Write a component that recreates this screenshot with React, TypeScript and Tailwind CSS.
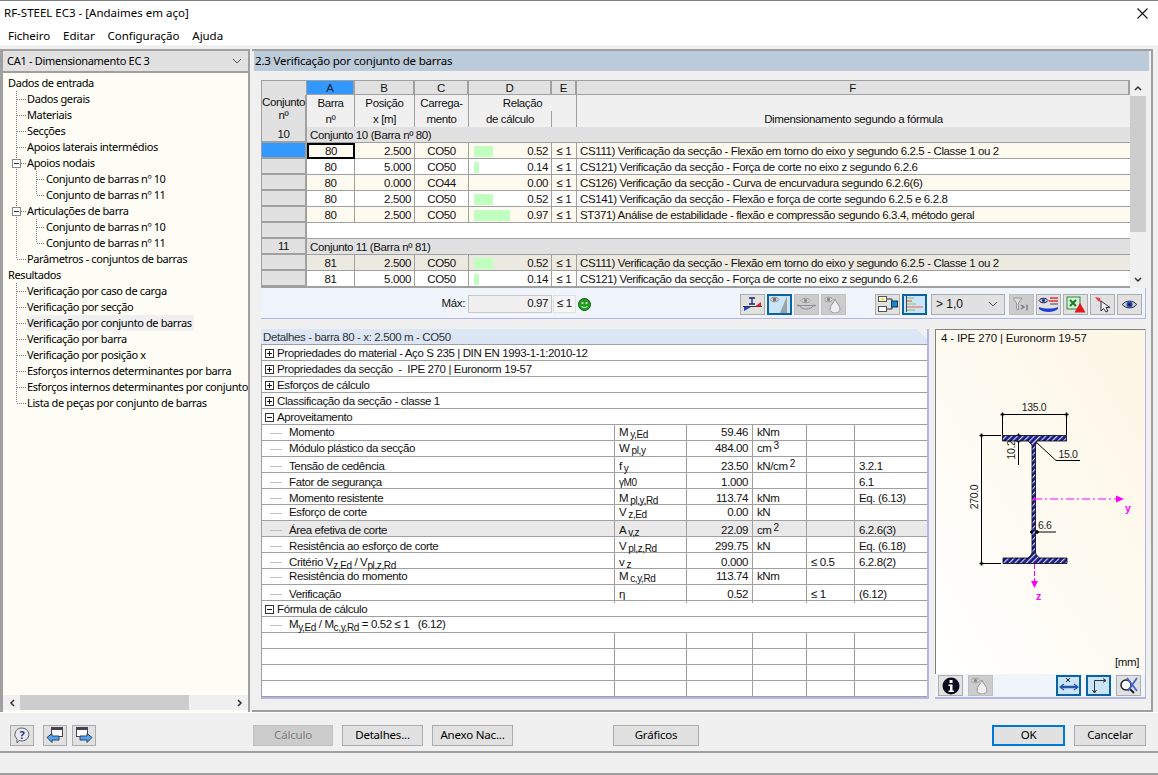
import type { ReactNode } from 'react'

const ui = { fontFamily: '"Noto Sans", sans-serif' }

type TreeRow = { label: string; level: 0 | 1 | 2; box?: boolean; last?: boolean; lastChild?: boolean; on?: boolean }

const tree: TreeRow[] = [
  { label: 'Dados de entrada', level: 0 },
  { label: 'Dados gerais', level: 1 },
  { label: 'Materiais', level: 1 },
  { label: 'Secções', level: 1 },
  { label: 'Apoios laterais intermédios', level: 1 },
  { label: 'Apoios nodais', level: 1, box: true },
  { label: 'Conjunto de barras nº 10', level: 2 },
  { label: 'Conjunto de barras nº 11', level: 2, lastChild: true },
  { label: 'Articulações de barra', level: 1, box: true },
  { label: 'Conjunto de barras nº 10', level: 2 },
  { label: 'Conjunto de barras nº 11', level: 2, lastChild: true },
  { label: 'Parâmetros - conjuntos de barras', level: 1, last: true },
  { label: 'Resultados', level: 0 },
  { label: 'Verificação por caso de carga', level: 1 },
  { label: 'Verificação por secção', level: 1 },
  { label: 'Verificação por conjunto de barras', level: 1, on: true },
  { label: 'Verificação por barra', level: 1 },
  { label: 'Verificação por posição x', level: 1 },
  { label: 'Esforços internos determinantes por barra', level: 1 },
  { label: 'Esforços internos determinantes por conjunto', level: 1 },
  { label: 'Lista de peças por conjunto de barras', level: 1, last: true },
]

function Guide({ row }: { row: TreeRow }) {
  const dots = '#777'
  if (row.level === 0) return <span className="w-[5px] shrink-0" />
  return (
    <svg width={row.level === 1 ? 24 : 43} height={16} className="shrink-0" shapeRendering="crispEdges">
      <line x1={13.5} x2={13.5} y1={0} y2={row.last ? 8 : 16} stroke={dots} strokeDasharray="1 1" />
      {row.level === 2 && (
        <>
          <line x1={33.5} x2={33.5} y1={0} y2={row.lastChild ? 8 : 16} stroke={dots} strokeDasharray="1 1" />
          <line x1={34} x2={42} y1={8.5} y2={8.5} stroke={dots} strokeDasharray="1 1" />
        </>
      )}
      {row.level === 1 && <line x1={14} x2={23} y1={8.5} y2={8.5} stroke={dots} strokeDasharray="1 1" />}
      {row.box && (
        <>
          <rect x={9.5} y={4.5} width={8} height={8} fill="#fff" stroke="#888" />
          <line x1={11} x2={16} y1={8.5} y2={8.5} stroke="#333" />
        </>
      )}
    </svg>
  )
}

function Sidebar() {
  return (
    <div className="flex h-[663px] w-[250px] shrink-0 flex-col border-l-[3px] border-r-2 border-[#a0a0a0] bg-[#fdfdf5]">
      <div className="mb-px flex h-[24px] shrink-0 items-center justify-between border-y-2 border-[#a0a0a0] bg-[#e1e1e1] pl-[4px] pr-[6px] text-[11px] tracking-[-0.3px] text-black">
        <span>CA1 - Dimensionamento EC 3</span>
        <svg width="10" height="6" viewBox="0 0 10 6" fill="none" stroke="#555"><path d="M1 1l4 4 4-4" /></svg>
      </div>
      <div className="flex-1 overflow-hidden pt-px text-[11px] leading-[16px] tracking-[-0.38px] text-black">
        {tree.map((row, i) => (
          <div key={i} className="flex h-[16px] items-center whitespace-nowrap">
            <Guide row={row} />
            <span className={row.on ? 'bg-[#f0f0f0] pr-0.5' : ''}>{row.label}</span>
          </div>
        ))}
      </div>
      <div className="mb-0.5 flex h-[15px] shrink-0 items-center bg-[#f0f0f0]">
        <span className="flex w-[17px] justify-center"><svg width="6" height="8" viewBox="0 0 6 8" fill="none" stroke="#333" strokeWidth="1.5"><path d="M5 1L2 4l3 3" /></svg></span>
        <span className="h-full w-[169px] bg-[#cdcdcd]" />
        <span className="flex-1" />
        <span className="flex w-[17px] justify-center"><svg width="6" height="8" viewBox="0 0 6 8" fill="none" stroke="#333" strokeWidth="1.5"><path d="M1 1l3 3-3 3" /></svg></span>
      </div>
    </div>
  )
}

const gridCols = 'grid grid-cols-[45px_48px_60px_54px_83px_25px_1fr]'
const cellLine = 'border-r border-b border-[#a0a0a0]'

function LetterHead({ letter, active }: { letter: string; active?: boolean }) {
  return (
    <div className={`flex h-[15px] items-center justify-center border-r-2 border-b border-t border-t-[#a0a0a0] border-r-[#a0a0a0] border-b-[#a0a0a0] pt-[2px] ${active ? 'bg-[#3399ff] text-[#123]' : 'bg-[#e1e1e1]'}`}>
      {letter}
    </div>
  )
}

type CheckRow = { bar: string; x: string; co: string; ratio: number; text: string; tone: 'cream' | 'white' | 'hover'; sel?: boolean }

function RowHead({ children, sel }: { children?: ReactNode; sel?: boolean }) {
  return (
    <div className={`flex h-[16px] items-center justify-center border-r-2 border-b-2 border-[#a0a0a0] pt-[2px] ${sel ? 'bg-[#3399ff]' : 'bg-[#e1e1e1]'}`}>
      {children}
    </div>
  )
}

function GroupRow({ id, label }: { id: string; label: string }) {
  return (
    <div className={gridCols}>
      <RowHead>{id}</RowHead>
      <div className="col-span-6 flex h-[16px] items-center border-b border-[#a0a0a0] bg-[#e1e1e1] pl-[3px] pt-[2px]">{label}</div>
    </div>
  )
}

function Check({ row }: { row: CheckRow }) {
  const bg = row.tone === 'cream' ? 'bg-[#fffaf0]' : row.tone === 'hover' ? 'bg-[#ece9e0]' : 'bg-white'
  const cell = `flex h-[16px] items-center pt-[2px] ${cellLine} ${bg}`
  return (
    <div className={gridCols}>
      <RowHead sel={row.sel} />
      <div className={row.sel ? `flex h-[16px] items-center justify-center border-2 border-black pt-px ${bg}` : `${cell} justify-center`}>{row.bar}</div>
      <div className={`${cell} justify-end pr-[3px]`}>{row.x}</div>
      <div className={`${cell} justify-center`}>{row.co}</div>
      <div className={`${cell} justify-between pl-[5px] pr-[3px]`}>
        <span className="h-[11px] bg-[#c0ffc0]" style={{ width: Math.round(row.ratio * 37) }} />
        <span>{row.ratio.toFixed(2)}</span>
      </div>
      <div className={`${cell} justify-center`}>≤ 1</div>
      <div className={`flex h-[16px] items-center whitespace-nowrap border-b border-[#a0a0a0] pl-[3px] pt-[2px] ${bg}`}>{row.text}</div>
    </div>
  )
}

const TX = {
  a: 'CS111) Verificação da secção - Flexão em torno do eixo y segundo 6.2.5 - Classe 1 ou 2',
  b: 'CS121) Verificação da secção - Força de corte no eixo z segundo 6.2.6',
  c: 'CS126) Verificação da secção - Curva de encurvadura segundo 6.2.6(6)',
  d: 'CS141) Verificação da secção - Flexão e força de corte segundo 6.2.5 e 6.2.8',
  e: 'ST371) Análise de estabilidade - flexão e compressão segundo 6.3.4, método geral',
}

function VScroll() {
  return (
    <div className="flex w-[16px] shrink-0 flex-col bg-[#f0f0f0]">
      <span className="flex h-[16px] items-center justify-center"><svg width="8" height="6" viewBox="0 0 8 6" fill="none" stroke="#333" strokeWidth="1.5"><path d="M1 5l3-3 3 3" /></svg></span>
      <span className="h-[136px] bg-[#cdcdcd]" />
      <span className="flex-1" />
      <span className="flex h-[16px] items-center justify-center"><svg width="8" height="6" viewBox="0 0 8 6" fill="none" stroke="#333" strokeWidth="1.5"><path d="M1 1l3 3 3-3" /></svg></span>
    </div>
  )
}

function ResultsTable() {
  return (
    <div className="flex">
      <div className="w-[869px] overflow-hidden border-l border-b border-[#a0a0a0] bg-white">
        <div className={gridCols}>
          <div className="h-[15px] border-t border-r border-[#a0a0a0] bg-[#e1e1e1]" />
          <LetterHead letter="A" active />
          <LetterHead letter="B" />
          <LetterHead letter="C" />
          <LetterHead letter="D" />
          <LetterHead letter="E" />
          <LetterHead letter="F" />
        </div>
        <div className={`${gridCols} h-[32px] leading-[16px]`}>
          <div className="border-r-2 border-b border-[#a0a0a0] bg-[#e1e1e1] pt-px text-center leading-[13px]">Conjunto<br />nº</div>
          <div className="border-r border-b border-[#a0a0a0] bg-[#f0f0f0] text-center">Barra<br />nº</div>
          <div className="border-r border-b border-[#a0a0a0] bg-[#f0f0f0] text-center">Posição<br />x [m]</div>
          <div className="border-r border-b border-[#a0a0a0] bg-[#f0f0f0] text-center">Carrega-<br />mento</div>
          <div className="col-span-2 flex flex-col border-r border-b border-[#a0a0a0] bg-[#f0f0f0]">
            <span className="text-center">Relação</span>
            <span className="flex flex-1">
              <span className="w-[83px] whitespace-nowrap border-r border-[#a0a0a0] text-center">de cálculo</span>
            </span>
          </div>
          <div className="border-b border-[#a0a0a0] bg-[#f0f0f0] pt-[16px] text-center">Dimensionamento segundo a fórmula</div>
        </div>
        <GroupRow id="10" label="Conjunto 10 (Barra nº 80)" />
        <Check row={{ bar: '80', x: '2.500', co: 'CO50', ratio: 0.52, text: TX.a, tone: 'cream', sel: true }} />
        <Check row={{ bar: '80', x: '5.000', co: 'CO50', ratio: 0.14, text: TX.b, tone: 'white' }} />
        <Check row={{ bar: '80', x: '0.000', co: 'CO44', ratio: 0, text: TX.c, tone: 'cream' }} />
        <Check row={{ bar: '80', x: '2.500', co: 'CO50', ratio: 0.52, text: TX.d, tone: 'white' }} />
        <Check row={{ bar: '80', x: '2.500', co: 'CO50', ratio: 0.97, text: TX.e, tone: 'cream' }} />
        <div className={gridCols}>
          <RowHead />
          <div className="col-span-6 h-[16px] border-b border-[#a0a0a0] bg-white" />
        </div>
        <GroupRow id="11" label="Conjunto 11 (Barra nº 81)" />
        <Check row={{ bar: '81', x: '2.500', co: 'CO50', ratio: 0.52, text: TX.a, tone: 'hover' }} />
        <Check row={{ bar: '81', x: '5.000', co: 'CO50', ratio: 0.14, text: TX.b, tone: 'white' }} />
      </div>
      <VScroll />
    </div>
  )
}

function ToolBtn({ children, active, off }: { children: ReactNode; active?: boolean; off?: boolean }) {
  const tone = active ? 'border-2 border-[#0a64a4] bg-[#cce4f7]' : off ? 'border border-[#bfbfbf] bg-[#cccccc]' : 'border border-[#adadad] bg-[#e1e1e1]'
  return <button type="button" className={`flex h-[21px] w-[25px] shrink-0 items-center justify-center ${tone}`}>{children}</button>
}

function Eye({ x = 0, y = 0, c = '#8c8c8c', p = '#666' }: { x?: number; y?: number; c?: string; p?: string }) {
  return (
    <g transform={`translate(${x} ${y})`}>
      <path d="M0 3.5C2 .5 7 .5 9 3.5 7 6.5 2 6.5 0 3.5z" fill="#ddd" stroke={c} />
      <circle cx="4.5" cy="3.5" r="1.7" fill={p} />
    </g>
  )
}

const Ic = {
  Stress: () => (
    <svg width="19" height="15" viewBox="0 0 19 15" fill="none">
      <path d="M6 1h6M9 1v6M6 7h6" stroke="#1a237e" strokeWidth="1.3" />
      <path d="M0 9.5h19" stroke="#333" />
      <path d="M1 10h7L1 14z" fill="#1d3fd6" />
      <path d="M18 9.5V5l-6 4.5z" fill="#e0202a" />
    </svg>
  ),
  EyeWedge: () => (
    <svg width="19" height="17" viewBox="0 0 19 17" fill="none">
      <Eye x={0} y={0} />
      <path d="M17 0v17h-7z" fill="#9aa4a8" />
    </svg>
  ),
  EyeArc: () => (
    <svg width="19" height="15" viewBox="0 0 19 15" fill="none">
      <Eye x={4} y={0} c="#999" p="#888" />
      <path d="M0 8.5h19M3 9c1 4 11 4 13 0" stroke="#8f8f8f" />
      <circle cx="1.5" cy="8.5" r="1" fill="#8f8f8f" />
      <circle cx="17.5" cy="8.5" r="1" fill="#8f8f8f" />
    </svg>
  ),
  EyeDrop: () => (
    <svg width="19" height="17" viewBox="0 0 19 17" fill="none">
      <Eye x={0} y={0} c="#999" p="#888" />
      <path d="M11 3c1 4 5 6 5 10a5 4 0 0 1-10 0c0-4 4-6 5-10z" fill="#eee" stroke="#999" />
    </svg>
  ),
  Flow: () => (
    <svg width="20" height="16" viewBox="0 0 20 16" fill="none">
      <rect x=".5" y=".5" width="8" height="5" fill="#fff" stroke="#555" />
      <path d="M2 2.5h5L4.5 5.5z" fill="#e8e020" />
      <rect x=".5" y="10.5" width="8" height="5" fill="#fff" stroke="#555" />
      <rect x="13.5" y="5" width="6" height="6" fill="#1188cc" stroke="#135" />
      <path d="M9 3h5v2M9 13h5v-2" stroke="#333" />
    </svg>
  ),
  Bars: () => (
    <svg width="18" height="16" viewBox="0 0 18 16" shapeRendering="crispEdges">
      <rect x="0" y="0" width="1" height="16" fill="#444" />
      <rect x="1" y="1" width="7" height="2" fill="#b0d0b0" />
      <rect x="1" y="4" width="5" height="2" fill="#e09090" />
      <rect x="1" y="7" width="9" height="2" fill="#a8d8a8" />
      <rect x="1" y="10" width="16" height="2" fill="#e0a0a0" />
      <rect x="1" y="13" width="8" height="2" fill="#a0d0a0" />
    </svg>
  ),
  Funnel: () => (
    <svg width="18" height="15" viewBox="0 0 18 15" fill="none">
      <path d="M0 1h9L5.5 6v7l-2-1V6z" fill="#ddd" stroke="#999" />
      <path d="M8 8l3 2-3 2M14 7.5v6" stroke="#777" strokeWidth="1.3" />
    </svg>
  ),
  EyeStripes: () => (
    <svg width="21" height="17" viewBox="0 0 21 17" fill="none">
      <path d="M12 2h8M11 5h9" stroke="#e0303a" strokeWidth="1.4" />
      <path d="M12 8h8" stroke="#444" />
      <Eye x={1} y={1} c="#113" p="#1a3fb0" />
      <path d="M1 11c5 2 14 2 19 0v2c-5 4-14 4-19 0z" fill="#1d3fd6" />
    </svg>
  ),
  Excel: () => (
    <svg width="20" height="17" viewBox="0 0 20 17">
      <rect x="1" y="1" width="13" height="12" fill="#d8f0d8" stroke="#2a8a3a" />
      <path d="M4 4l6 6M10 4l-6 6" stroke="#1a7a2a" strokeWidth="2" />
      <path d="M14 7l5.5 9.5h-11z" fill="#e01820" />
    </svg>
  ),
  Pointer: () => (
    <svg width="18" height="18" viewBox="0 0 18 18">
      <path d="M1 2l5 1 1 4-3-1z" fill="#e04050" />
      <path d="M7 6v10l2.5-2.5L12 17l2-1-2-3.500h4z" fill="#eee" stroke="#333" />
    </svg>
  ),
  EyeBlue: () => (
    <svg width="15" height="11" viewBox="0 0 15 11">
      <path d="M.5 5.500C3 1 12 1 14.500 5.500 12 10 3 10 .5 5.500z" fill="#c8ccd8" stroke="#223" />
      <circle cx="7.500" cy="5.500" r="3" fill="#2448c0" />
      <circle cx="7.500" cy="5.500" r="1.200" fill="#111" />
    </svg>
  ),
  Info: () => (
    <svg width="18" height="18" viewBox="0 0 18 18">
      <circle cx="9" cy="9" r="8.500" fill="#0c0c20" />
      <rect x="7.500" y="3" width="3" height="3" fill="#fff" />
      <path d="M6.500 7.500h4v6h1.500v1.500H6.500v-1.500H8V9H6.500z" fill="#fff" />
    </svg>
  ),
  AxisX: () => (
    <svg width="20" height="17" viewBox="0 0 20 17" fill="none">
      <path d="M7 1l4 4M11 1L7 5" stroke="#222" />
      <path d="M2 10h16" stroke="#2255aa" strokeWidth="2.500" />
      <path d="M5 7l-4 3 4 3M15 7l4 3-4 3" stroke="#2255aa" strokeWidth="1.200" />
    </svg>
  ),
  AxisYZ: () => (
    <svg width="16" height="16" viewBox="0 0 16 16" fill="none" stroke="#333">
      <path d="M3.500 2.500h11M12 .5l3 2-3 2M3.500 2.500v12M1.500 12l2 3 2-3" />
    </svg>
  ),
  Search: () => (
    <svg width="20" height="17" viewBox="0 0 20 17" fill="none">
      <circle cx="7" cy="8" r="5" fill="#fff" stroke="#222" strokeWidth="1.500" />
      <path d="M11 12l4 4" stroke="#222" strokeWidth="2" />
      <path d="M8 1l10 13M18 1L9 14" stroke="#4466cc" strokeWidth="1.800" />
    </svg>
  ),
}

function MaxBar() {
  return (
    <div className="flex h-[31px] w-[885px] items-center border-b border-r border-[#b4b4e6] bg-[#f0f4fb] pt-[2px]">
      <span className="ml-[176px] w-[28px] text-right">Máx:</span>
      <span className="ml-[3px] flex h-[18px] w-[84px] items-center justify-end border border-[#c8c8c8] bg-[#f0f0f0] pr-[3px]">0.97</span>
      <span className="ml-px flex h-[18px] w-[23px] items-center justify-center border border-[#e0e0e0] bg-[#f5f5f5]">≤ 1</span>
      <svg width="13" height="13" viewBox="0 0 13 13" className="ml-[2px] shrink-0">
        <circle cx="6.500" cy="6.500" r="6" fill="#20a020" stroke="#0c600c" />
        <circle cx="4.500" cy="5" r="1" fill="#fff" />
        <circle cx="8.500" cy="5" r="1" fill="#fff" />
        <path d="M3.500 8c1 2 5 2 6 0" stroke="#fff" fill="none" />
      </svg>
      <div className="ml-[149px] flex gap-[2px]">
        <ToolBtn><Ic.Stress /></ToolBtn>
        <ToolBtn active><Ic.EyeWedge /></ToolBtn>
        <ToolBtn off><Ic.EyeArc /></ToolBtn>
        <ToolBtn off><Ic.EyeDrop /></ToolBtn>
      </div>
      <div className="ml-[29px] flex gap-[2px]">
        <ToolBtn><Ic.Flow /></ToolBtn>
        <ToolBtn active><Ic.Bars /></ToolBtn>
      </div>
      <div className="ml-[4px] flex h-[21px] w-[74px] items-center justify-between border border-[#adadad] bg-[#e1e1e1] pl-[4px] pr-[6px] text-[12px] tracking-normal">
        <span>&gt; 1,0</span>
        <svg width="10" height="6" viewBox="0 0 10 6" fill="none" stroke="#555"><path d="M1 1l4 4 4-4" /></svg>
      </div>
      <div className="ml-[4px] flex gap-[2px]">
        <ToolBtn off><Ic.Funnel /></ToolBtn>
        <ToolBtn><Ic.EyeStripes /></ToolBtn>
        <ToolBtn><Ic.Excel /></ToolBtn>
        <ToolBtn><Ic.Pointer /></ToolBtn>
        <ToolBtn><Ic.EyeBlue /></ToolBtn>
      </div>
    </div>
  )
}

function Sym({ b, s, up }: { b: string; s?: string; up?: string }) {
  return (
    <span className="whitespace-nowrap">
      {b}
      {s && <span className="relative top-[2px] ml-[2px] text-[10px]">{s}</span>}
      {up && <span className="relative top-[-3px] ml-[2px] text-[10px]">{up}</span>}
    </span>
  )
}

type DetailRow = { name: ReactNode; sym: ReactNode; val: string; unit?: ReactNode; lim?: string; ref?: string; hl?: boolean }

const details: DetailRow[] = [
  { name: 'Momento', sym: <Sym b="M" s="y,Ed" />, val: '59.46', unit: 'kNm' },
  { name: 'Módulo plástico da secção', sym: <Sym b="W" s="pl,y" />, val: '484.00', unit: <Sym b="cm" up="3" /> },
  { name: 'Tensão de cedência', sym: <Sym b="f" s="y" />, val: '23.50', unit: <Sym b="kN/cm" up="2" />, ref: '3.2.1' },
  { name: 'Fator de segurança', sym: <span className="text-[10px]">γM0</span>, val: '1.000', ref: '6.1' },
  { name: 'Momento resistente', sym: <Sym b="M" s="pl,y,Rd" />, val: '113.74', unit: 'kNm', ref: 'Eq. (6.13)' },
  { name: 'Esforço de corte', sym: <Sym b="V" s="z,Ed" />, val: '0.00', unit: 'kN' },
  { name: 'Área efetiva de corte', sym: <Sym b="A" s="v,z" />, val: '22.09', unit: <Sym b="cm" up="2" />, ref: '6.2.6(3)', hl: true },
  { name: 'Resistência ao esforço de corte', sym: <Sym b="V" s="pl,z,Rd" />, val: '299.75', unit: 'kN', ref: 'Eq. (6.18)' },
  { name: <>Critério V<sub className="text-[10px] leading-[0]">z,Ed</sub> / V<sub className="text-[10px] leading-[0]">pl,z,Rd</sub></>, sym: <Sym b="v" s="z" />, val: '0.000', lim: '≤ 0.5', ref: '6.2.8(2)' },
  { name: 'Resistência do momento', sym: <Sym b="M" s="c,y,Rd" />, val: '113.74', unit: 'kNm' },
  { name: 'Verificação', sym: 'η', val: '0.52', lim: '≤ 1', ref: '(6.12)' },
]

const detailCols = 'grid h-[16px] grid-cols-[353px_72px_66px_54px_48px_1fr] border-b border-[#a0a0a0]'
const dCell = 'flex items-center overflow-hidden border-r border-[#a0a0a0] pt-px'

function SectionRow({ label, open }: { label: string; open?: boolean }) {
  return (
    <div className="flex h-[16px] items-center border-b border-[#a0a0a0] pl-[3px] pt-[2px]">
      <svg width="10" height="10" viewBox="0 0 10 10" className="mr-[2px] shrink-0" shapeRendering="crispEdges">
        <rect x=".5" y=".5" width="8" height="8" fill="#fff" stroke="#333" />
        <path d={open ? 'M2 4.500h5' : 'M2 4.500h5M4.500 2v5'} stroke="#111" />
      </svg>
      <span className="whitespace-pre">{label}</span>
    </div>
  )
}

function DetailLine({ row }: { row: DetailRow }) {
  return (
    <div className={`${detailCols} ${row.hl ? 'bg-[#e9e9e9]' : ''}`}>
      <div className={`${dCell} pl-[8px]`}>
        <span className="mr-[7px] h-px w-[12px] shrink-0 bg-[#c0c0c0]" />
        <span className="whitespace-nowrap">{row.name}</span>
      </div>
      <div className={`${dCell} pl-[4px]`}>{row.sym}</div>
      <div className={`${dCell} justify-end pr-[4px]`}>{row.val}</div>
      <div className={`${dCell} pl-[4px]`}>{row.unit}</div>
      <div className={`${dCell} pl-[4px]`}>{row.lim}</div>
      <div className="flex items-center pl-[4px] pt-px">{row.ref}</div>
    </div>
  )
}

function DetailsPanel() {
  return (
    <div className="flex w-[668px] shrink-0 flex-col border-r-2 border-b-2 border-[#b4b4e6]">
      <div className="flex h-[15px] items-center bg-[#dce6f4] pl-[2px] pt-[2px] text-[#333] [clip-path:polygon(0_0,calc(100%-10px)_0,100%_10px,100%_100%,0_100%)]">Detalhes - barra 80 - x: 2.500 m - CO50</div>
      <div className="flex-1 border-l border-t border-[#a0a0a0] bg-white">
        <SectionRow label="Propriedades do material - Aço S 235 | DIN EN 1993-1-1:2010-12" />
        <SectionRow label="Propriedades da secção  -  IPE 270 | Euronorm 19-57" />
        <SectionRow label="Esforços de cálculo" />
        <SectionRow label="Classificação da secção - classe 1" />
        <SectionRow label="Aproveitamento" open />
        {details.map((row, i) => <DetailLine key={i} row={row} />)}
        <SectionRow label="Fórmula de cálculo" open />
        <div className="flex h-[16px] items-center border-b border-[#a0a0a0] pl-[8px] pt-px">
          <span className="mr-[7px] h-px w-[12px] shrink-0 bg-[#c0c0c0]" />
          <span className="whitespace-nowrap">M<sub className="text-[10px] leading-[0]">y,Ed</sub> / M<sub className="text-[10px] leading-[0]">c,y,Rd</sub> = 0.52 ≤ 1&nbsp;&nbsp; (6.12)</span>
        </div>
        {[0, 1, 2, 3].map((i) => (
          <div key={i} className={detailCols}>
            <div className={dCell} /><div className={dCell} /><div className={dCell} /><div className={dCell} /><div className={dCell} /><div />
          </div>
        ))}
      </div>
    </div>
  )
}

function Dot({ x, y }: { x: number; y: number }) {
  return <path d={`M${x - 2} ${y}h4M${x} ${y - 2}v4`} stroke="#000" strokeWidth="1.500" />
}

function SectionDrawing() {
  const text = { fontFamily: '"Liberation Sans", sans-serif', fontSize: 10.5, letterSpacing: -0.4, fill: '#222' }
  return (
    <svg width="208" height="305" viewBox="0 15 208 305" fill="none">
      <defs>
        <pattern id="hatch" width="4" height="4" patternUnits="userSpaceOnUse" patternTransform="rotate(45)">
          <rect width="4" height="4" fill="#1a1a80" />
          <rect width="1.200" height="4" fill="#cfd4ff" />
        </pattern>
      </defs>
      <path d="M66.500 84.500h64M66.500 84.500V105M130.500 84.500V105M45.500 105v129M45 105.500h20M45 233.500h20M82.500 105v30M100 112l20 18.500h24M94 202h26" stroke="#000" />
      <Dot x={66.500} y={84.500} /><Dot x={130.500} y={84.500} /><Dot x={45.500} y={105.500} /><Dot x={45.500} y={233.500} />
      <Dot x={82.500} y={105.500} /><Dot x={82.500} y={111} /><Dot x={96} y={202} /><Dot x={101} y={202} />
      <path d="M66.500 105.500h64v5.500H101l-1 3c-.5 1-1 1-.5 1v108l1 2 3 3h27.500v5.500h-64V228H92l3-3 1-2V115l-1-1-3-3H66.500z" fill="url(#hatch)" stroke="#000" strokeWidth=".8" />
      <path d="M98 169h82" stroke="#ff00ff" strokeDasharray="8 3 2 3" />
      <path d="M180 165.500l8 3.500-8 3.500z" fill="#ff00ff" />
      <path d="M98.500 234v18" stroke="#ff00ff" strokeDasharray="5 2" />
      <path d="M95 251h7l-3.500 7z" fill="#ff00ff" />
      <circle cx="98.500" cy="169" r="1.500" fill="#ff00ff" />
      <text x="98" y="81" textAnchor="middle" style={text}>135.0</text>
      <text x="122.500" y="128" style={text}>15.0</text>
      <text x="102" y="199" style={text}>6.6</text>
      <text transform="translate(79 120) rotate(-90)" textAnchor="middle" style={text}>10.2</text>
      <text transform="translate(42 167) rotate(-90)" textAnchor="middle" style={text}>270.0</text>
      <text x="189" y="182" style={{ ...text, fill: '#ff00ff', fontWeight: 700 }}>y</text>
      <text x="100" y="270" style={{ ...text, fill: '#ff00ff', fontWeight: 700 }}>z</text>
    </svg>
  )
}

function SectionPanel() {
  return (
    <div className="flex w-[211px] shrink-0 flex-col border-r border-b-2 border-[#b4b4e6]">
      <div className="flex h-[345px] flex-col border-l border-t border-[#808080] bg-linear-to-tr from-white to-[#fdf6e4] pb-[4px]">
        <div className="h-[15px] pl-[5px] pt-px leading-[14px] tracking-[-0.15px]">4 - IPE 270 | Euronorm 19-57</div>
        <div className="min-h-0 flex-1"><SectionDrawing /></div>
        <div className="h-[14px] pr-[6px] text-right leading-[12px]">[mm]</div>
      </div>
      <div className="flex flex-1 items-center bg-[#f0f4fb] pl-[3px]">
        <ToolBtn><Ic.Info /></ToolBtn>
        <span className="ml-[5px]"><ToolBtn off><Ic.EyeDrop /></ToolBtn></span>
        <div className="ml-auto mr-[4px] flex gap-[5px]">
          <ToolBtn active><Ic.AxisX /></ToolBtn>
          <ToolBtn active><Ic.AxisYZ /></ToolBtn>
          <ToolBtn><Ic.Search /></ToolBtn>
        </div>
      </div>
    </div>
  )
}

function Main() {
  return (
    <div className="flex h-[663px] flex-1 flex-col border-t-2 border-r-2 border-b-2 border-[#a0a0a0] text-[11.5px] tracking-[-0.38px] text-[#111]" style={{ fontFamily: '"Liberation Sans", sans-serif' }}>
      <div className="mx-[2px] flex h-[20px] shrink-0 items-center bg-[#bccbd9] pl-px text-[11.5px] tracking-[-0.2px] text-black" style={ui}>2.3 Verificação por conjunto de barras</div>
      <div className="flex flex-1 flex-col pl-[9px] pt-[9px]">
        <ResultsTable />
        <MaxBar />
        <div className="mt-[10px] flex gap-[6px]">
          <DetailsPanel />
          <SectionPanel />
        </div>
      </div>
    </div>
  )
}

function DlgBtn({ children, w, off, def }: { children: ReactNode; w: string; off?: boolean; def?: boolean }) {
  const tone = off ? 'border border-[#bfbfbf] bg-[#cccccc] text-[#808080]' : def ? 'border-2 border-[#0078d7] bg-[#e1e1e1]' : 'border border-[#adadad] bg-[#e1e1e1]'
  return <button type="button" className={`flex h-[21px] items-center justify-center text-[11.5px] tracking-[-0.2px] ${w} ${tone}`}>{children}</button>
}

function BottomBar() {
  return (
    <div className="flex h-[41px] shrink-0 items-center border-t border-b-2 border-t-white border-b-[#a0a0a0] pl-[10px] pr-[12px] pt-[6px]" style={ui}>
      <button type="button" className="flex h-[21px] w-[24px] items-center justify-center border border-[#adadad] bg-[#e1e1e1]">
        <svg width="16" height="17" viewBox="0 0 16 17">
          <path d="M8 1a7 6.500 0 1 1-3 12.400L3 16v-3.800A7 6.500 0 0 1 8 1z" fill="#e8e8f0" stroke="#666" />
          <text x="8" y="12" textAnchor="middle" style={{ fontSize: 11, fontWeight: 700, fill: '#223a8a' }}>?</text>
        </svg>
      </button>
      <button type="button" className="ml-[9px] flex h-[21px] w-[24px] items-center justify-center border border-[#adadad] bg-[#e1e1e1]">
        <svg width="18" height="17" viewBox="0 0 18 17">
          <rect x="5.500" y=".5" width="11" height="9" fill="#fff" stroke="#445" />
          <rect x="6" y="1" width="10" height="2" fill="#445" />
          <path d="M1 10.500l5-4v2.500h7v4H6v2.500z" fill="#5aa0f0" stroke="#246" />
        </svg>
      </button>
      <button type="button" className="ml-[5px] flex h-[21px] w-[24px] items-center justify-center border border-[#adadad] bg-[#e1e1e1]">
        <svg width="18" height="17" viewBox="0 0 18 17">
          <rect x="1.500" y=".5" width="11" height="9" fill="#fff" stroke="#445" />
          <rect x="2" y="1" width="10" height="2" fill="#445" />
          <path d="M17 10.500l-5-4v2.500H5v4h7v2.500z" fill="#5aa0f0" stroke="#246" />
        </svg>
      </button>
      <div className="ml-[157px] flex gap-[9px]">
        <DlgBtn w="w-[80px]" off>Cálculo</DlgBtn>
        <DlgBtn w="w-[81px]">Detalhes...</DlgBtn>
        <DlgBtn w="w-[81px]">Anexo Nac...</DlgBtn>
      </div>
      <div className="ml-[100px]"><DlgBtn w="w-[86px]">Gráficos</DlgBtn></div>
      <div className="ml-auto flex gap-[9px]">
        <DlgBtn w="w-[73px]" def>OK</DlgBtn>
        <DlgBtn w="w-[72px]">Cancelar</DlgBtn>
      </div>
    </div>
  )
}

export default function App() {
  return (
    <div className="flex h-[775px] w-[1158px] flex-col overflow-hidden bg-[#f0f0f0] text-black" style={ui}>
      <div className="flex h-[25px] shrink-0 items-center justify-between border-t border-[#808080] bg-white pl-[4px] pr-[10px] text-[11.5px]">
        <span>RF-STEEL EC3 - [Andaimes em aço]</span>
        <svg width="11" height="11" viewBox="0 0 11 11" stroke="#111" strokeWidth="1.100"><path d="M.5.5l10 10M10.500.5l-10 10" /></svg>
      </div>
      <div className="flex h-[20px] shrink-0 items-center gap-[13px] bg-white pl-[8px] pt-[2px] text-[11.5px] tracking-[-0.05px]">
        <span>Ficheiro</span><span>Editar</span><span>Configuração</span><span>Ajuda</span>
      </div>
      <div className="flex shrink-0 pt-[4px]">
        <Sidebar />
        <span className="w-[2px] shrink-0" />
        <Main />
        <span className="w-[5px] shrink-0" />
      </div>
      <BottomBar />
      <div className="flex-1 border-b-2 border-[#a0a0a0]" />
    </div>
  )
}
